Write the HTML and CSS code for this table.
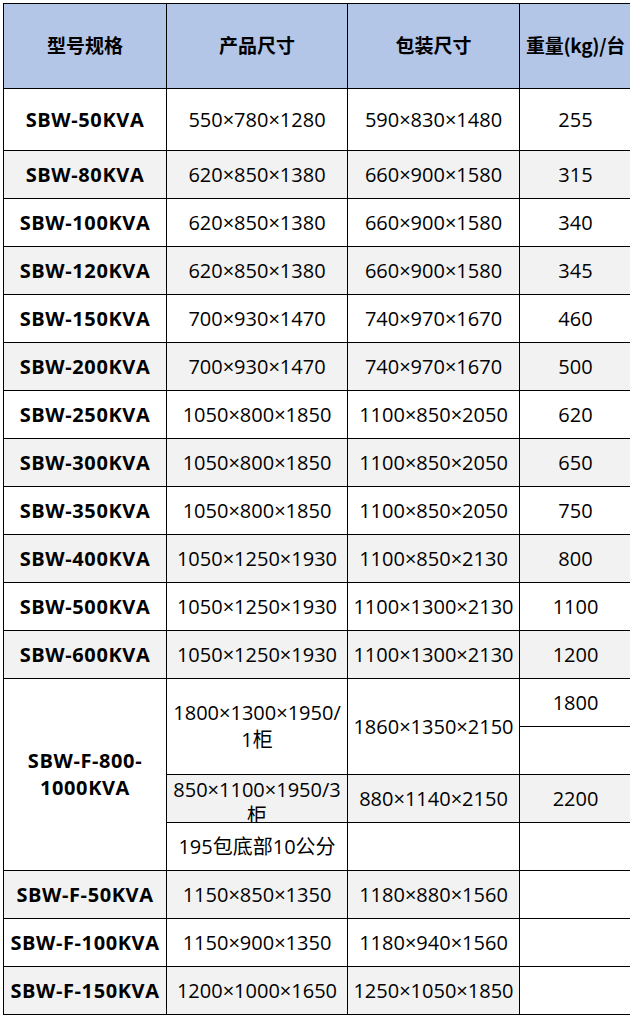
FILE: index.html
```html
<!DOCTYPE html>
<html lang="zh-CN">
<head>
<meta charset="utf-8">
<title>型号规格</title>
<link rel="stylesheet" href="styles.css">
</head>
<body>
<table class="spec">
  <colgroup>
    <col class="c1"><col class="c2"><col class="c3"><col class="c4">
  </colgroup>
  <thead>
    <tr class="head">
      <th>型号规格</th><th>产品尺寸</th><th>包装尺寸</th><th class="weight-h">重量(kg)/台</th>
    </tr>
  </thead>
  <tbody>
    <tr class="first"><td class="model">SBW-50KVA</td><td>550×780×1280</td><td>590×830×1480</td><td>255</td></tr>
    <tr class="alt"><td class="model">SBW-80KVA</td><td>620×850×1380</td><td>660×900×1580</td><td>315</td></tr>
    <tr><td class="model">SBW-100KVA</td><td>620×850×1380</td><td>660×900×1580</td><td>340</td></tr>
    <tr class="alt"><td class="model">SBW-120KVA</td><td>620×850×1380</td><td>660×900×1580</td><td>345</td></tr>
    <tr><td class="model">SBW-150KVA</td><td>700×930×1470</td><td>740×970×1670</td><td>460</td></tr>
    <tr class="alt"><td class="model">SBW-200KVA</td><td>700×930×1470</td><td>740×970×1670</td><td>500</td></tr>
    <tr><td class="model">SBW-250KVA</td><td>1050×800×1850</td><td>1100×850×2050</td><td>620</td></tr>
    <tr class="alt"><td class="model">SBW-300KVA</td><td>1050×800×1850</td><td>1100×850×2050</td><td>650</td></tr>
    <tr><td class="model">SBW-350KVA</td><td>1050×800×1850</td><td>1100×850×2050</td><td>750</td></tr>
    <tr class="alt"><td class="model">SBW-400KVA</td><td>1050×1250×1930</td><td>1100×850×2130</td><td>800</td></tr>
    <tr><td class="model">SBW-500KVA</td><td>1050×1250×1930</td><td>1100×1300×2130</td><td>1100</td></tr>
    <tr class="alt"><td class="model">SBW-600KVA</td><td>1050×1250×1930</td><td>1100×1300×2130</td><td>1200</td></tr>
    <tr>
      <td class="model" rowspan="4">SBW-F-800-<br>1000KVA</td>
      <td rowspan="2" class="wrap">1800×1300×1950/<br>1柜</td>
      <td rowspan="2">1860×1350×2150</td>
      <td>1800</td>
    </tr>
    <tr><td></td></tr>
    <tr>
      <td class="gray clip"><div class="clip-box">850×1100×1950/3<br>柜</div></td>
      <td class="gray">880×1140×2150</td>
      <td class="gray">2200</td>
    </tr>
    <tr><td>195包底部10公分</td><td></td><td></td></tr>
    <tr class="alt part"><td class="model">SBW-F-50KVA</td><td>1150×850×1350</td><td>1180×880×1560</td><td class="white"></td></tr>
    <tr><td class="model">SBW-F-100KVA</td><td>1150×900×1350</td><td>1180×940×1560</td><td></td></tr>
    <tr class="alt part"><td class="model">SBW-F-150KVA</td><td>1200×1000×1650</td><td>1250×1050×1850</td><td class="white"></td></tr>
  </tbody>
</table>
</body>
</html>
```

FILE: styles.css
```css
html, body {
  background: #ffffff;
}

body {
  margin: 3px;
  font-family: "Open Sans", "Noto Sans CJK SC", sans-serif;
  color: #000000;
}

.spec {
  border-collapse: collapse;
  table-layout: fixed;
  width: 628px;
}

.c1 { width: 163px; }
.c2 { width: 181px; }
.c3 { width: 172px; }
.c4 { width: 112px; }

.spec th,
.spec td {
  border: 1px solid #000000;
  padding: 0;
  text-align: center;
  vertical-align: middle;
  white-space: nowrap;
  font-size: 20px;
  line-height: 27px;
  font-weight: 400;
}

.spec td {
  padding-bottom: 1px;
}

.spec tr {
  height: 48px;
}

.spec .head {
  height: 85px;
  background: #b4c6e7;
}

.spec th {
  font-weight: 700;
  font-size: 19px;
  font-family: "Noto Sans CJK SC", sans-serif;
  padding-bottom: 4px;
}

.spec th.weight-h {
  letter-spacing: -0.3px;
}

.spec .first {
  height: 62px;
}

.spec .alt {
  background: #f2f2f2;
}

.spec td.model {
  font-weight: 700;
  letter-spacing: 0.6px;
}

.spec td.gray {
  background: #f2f2f2;
}

.spec td.white {
  background: #ffffff;
}

.spec td.clip {
  height: 47px;
  padding-bottom: 0;
}

.clip-box {
  height: 47px;
  overflow: hidden;
  display: flex;
  align-items: center;
  justify-content: center;
  line-height: 26px;
  padding-top: 8px;
  box-sizing: border-box;
}
```
